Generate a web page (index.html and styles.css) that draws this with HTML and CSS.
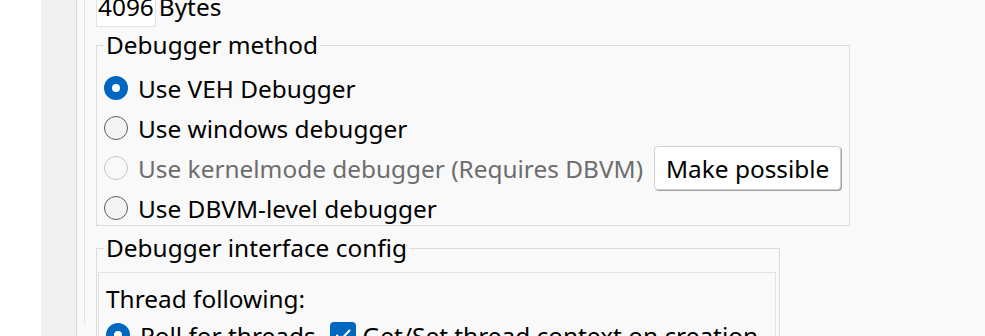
FILE: index.html
```html
<!DOCTYPE html>
<html lang="en">
<head>
    <meta charset="UTF-8">
    <title>Settings - Debugger Options</title>
    <link rel="stylesheet" href="styles.css">
</head>
<body>
    <div class="window">
        <div class="tree"></div>
        <div class="gutter"></div>
        <div class="panel">
            <div class="scroller">
                <div class="size-row">
                    <span class="edit">4096</span>
                    <span>Bytes</span>
                </div>

                <fieldset class="group method">
                    <legend>Debugger method</legend>
                    <label class="option first">
                        <span class="radio checked"></span>
                        <span>Use VEH Debugger</span>
                    </label>
                    <label class="option">
                        <span class="radio"></span>
                        <span>Use windows debugger</span>
                    </label>
                    <div class="option disabled">
                        <span class="radio"></span>
                        <span>Use kernelmode debugger (Requires DBVM)</span>
                        <button class="btn">Make possible</button>
                    </div>
                    <label class="option">
                        <span class="radio"></span>
                        <span>Use DBVM-level debugger</span>
                    </label>
                </fieldset>

                <fieldset class="group iface">
                    <legend>Debugger interface config</legend>
                    <div class="inner">
                        <div class="caption">Thread following:</div>
                        <div class="option">
                            <span class="radio checked"></span>
                            <span>Poll for threads</span>
                            <span class="check">
                                <svg width="26" height="26" viewBox="0 0 26 26"><path d="M7 13.5l4 4 8.5-9" fill="none" stroke="#fff" stroke-width="2" stroke-linecap="round" stroke-linejoin="round"/></svg>
                            </span>
                            <span>Get/Set thread context on creation</span>
                        </div>
                    </div>
                </fieldset>
            </div>
        </div>
    </div>
</body>
</html>
```

FILE: styles.css
```css
body {
    margin: 0;
    font-family: "Noto Sans", "Open Sans", sans-serif;
    font-size: 24.4px;
    color: #000;
    background-color: #fff;
}
.window {
    display: flex;
    height: 336px;
    overflow: hidden;
}
.tree {
    width: 41px;
    background-color: #fff;
}
.gutter {
    width: 35px;
    background-color: #f0f0f0;
}
.panel {
    flex: 1;
    border-left: 1px solid #dadada;
    background-color: #f9f9f9;
    padding-left: 7px;
}
.scroller {
    height: 100%;
    border-left: 1px solid #e4e4e4;
    padding-left: 11px;
}
.size-row {
    display: flex;
    align-items: flex-start;
    gap: 3px;
    margin-top: -12px;
    height: 38px;
    line-height: 38px;
}
.edit {
    background-color: #fff;
    border: 1px solid #e0e0e0;
    border-top: none;
    padding: 0 1px;
}
.group {
    box-sizing: border-box;
    margin: 0;
    border: 1px solid #dcdcdc;
}
.group legend {
    padding: 0 2px;
    line-height: 30px;
}
.method {
    width: 754px;
    margin-top: 4px;
    padding: 0 0 2px 7px;
}
.option {
    display: flex;
    align-items: center;
    height: 30px;
    margin-top: 10px;
    gap: 10px;
    white-space: nowrap;
}
.option.first {
    margin-top: 13px;
}
.option.disabled {
    color: #6d6d6d;
}
.radio {
    box-sizing: border-box;
    width: 24px;
    height: 24px;
    border: 1.5px solid #5c5c5c;
    border-radius: 50%;
    background-color: #f4f4f4;
    flex-shrink: 0;
}
.disabled .radio {
    border-color: #c6c6c6;
    background-color: #f9f9f9;
}
.radio.checked {
    border: 8px solid #0067c0;
    background-color: #fff;
}
.btn {
    font: inherit;
    color: #000;
    height: 44px;
    margin-left: 1px;
    padding: 0 11px;
    background-color: #fff;
    border: 1px solid #d0d0d0;
    border-radius: 4px;
    box-shadow: 1px 1px 0 #a0a0a0;
}
.iface {
    width: 684px;
    margin-top: 7px;
    padding: 0 3px 0 1px;
}
.iface legend {
    margin-left: 6px;
}
.inner {
    border: 1px solid #e2e2e2;
    margin-top: 9px;
    padding: 11px 0 0 7px;
    height: 80px;
}
.caption {
    line-height: 30px;
}
.inner .option {
    margin-top: 6px;
}
.check {
    width: 26px;
    height: 26px;
    border-radius: 4px;
    background-color: #0067c0;
    margin-left: 4px;
    margin-right: -3px;
    flex-shrink: 0;
}
.check svg {
    display: block;
}
```
